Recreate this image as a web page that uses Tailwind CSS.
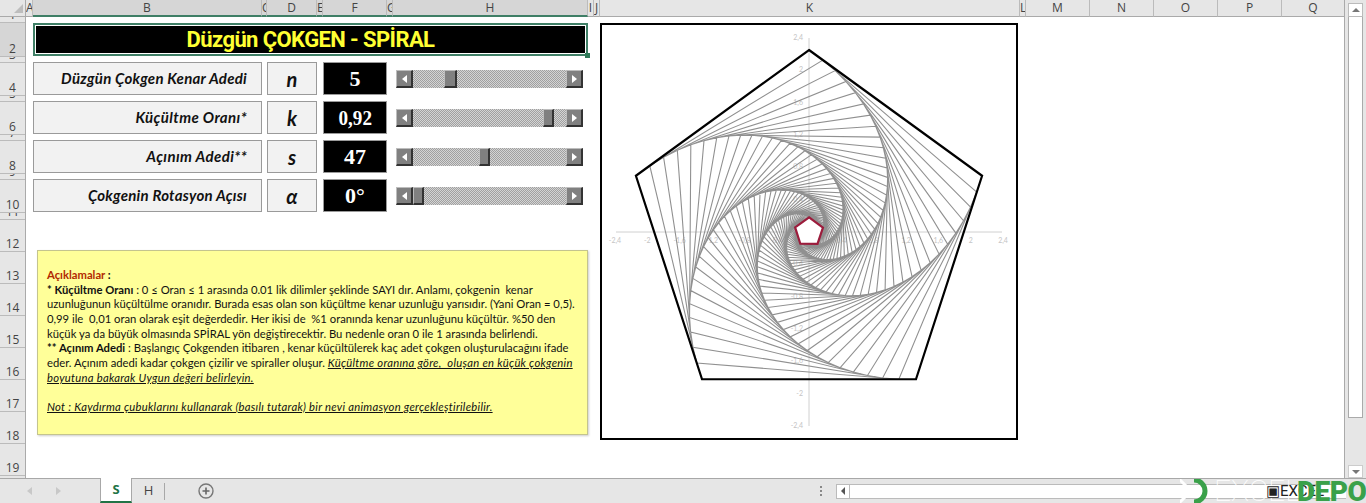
<!DOCTYPE html>
<html><head><meta charset="utf-8">
<script src="https://cdn.jsdelivr.net/npm/@tailwindcss/browser@4"></script>
</head>
<body class="w-[1366px] h-[503px] overflow-hidden bg-white font-['Liberation_Sans',sans-serif]">
<div class="flex flex-col h-[503px] w-[1366px] relative overflow-hidden">
  <!-- main -->
  <div class="flex h-[478px]">
    <div class="flex-1 flex flex-col min-w-0">
      <!-- column header -->
      <div class="flex h-[17px] bg-[#e6e6e6] text-[12px] text-[#444] font-['Open_Sans',sans-serif] leading-[16px] text-center shrink-0">
        <div class="w-[26px] shrink-0 border-r border-b border-[#aaa] flex items-end justify-end pr-[2px] pb-[3px]"><div class="w-0 h-0 border-l-[9px] border-l-transparent border-b-[9px] border-b-[#bdbdbd]"></div></div>
        <div class="w-[7px] border-r border-[#bbb] border-b border-b-[#aaa] overflow-hidden">A</div>
        <div class="w-[229px] bg-[#d6d6d6] border-r border-[#bbb] border-b-2 border-b-[#3f7f66]">B</div>
        <div class="w-[5px] bg-[#d6d6d6] border-r border-[#bbb] border-b-2 border-b-[#3f7f66] overflow-hidden">C</div>
        <div class="w-[50px] bg-[#d6d6d6] border-r border-[#bbb] border-b-2 border-b-[#3f7f66]">D</div>
        <div class="w-[6px] bg-[#d6d6d6] border-r border-[#bbb] border-b-2 border-b-[#3f7f66] overflow-hidden">E</div>
        <div class="w-[64px] bg-[#d6d6d6] border-r border-[#bbb] border-b-2 border-b-[#3f7f66]">F</div>
        <div class="w-[6px] bg-[#d6d6d6] border-r border-[#bbb] border-b-2 border-b-[#3f7f66] overflow-hidden">G</div>
        <div class="w-[195px] bg-[#d6d6d6] border-r border-[#bbb] border-b-2 border-b-[#3f7f66]">H</div>
        <div class="w-[6px] border-r border-[#bbb] border-b border-b-[#aaa] overflow-hidden">I</div>
        <div class="w-[6px] border-r border-[#bbb] border-b border-b-[#aaa] overflow-hidden">J</div>
        <div class="w-[420px] border-r border-[#bbb] border-b border-b-[#aaa]">K</div>
        <div class="w-[6px] border-r border-[#bbb] border-b border-b-[#aaa] overflow-hidden">L</div>
        <div class="w-[64px] border-r border-[#bbb] border-b border-b-[#aaa]">M</div>
        <div class="w-[64px] border-r border-[#bbb] border-b border-b-[#aaa]">N</div>
        <div class="w-[64px] border-r border-[#bbb] border-b border-b-[#aaa]">O</div>
        <div class="w-[64px] border-r border-[#bbb] border-b border-b-[#aaa]">P</div>
        <div class="flex-1 border-b border-b-[#aaa]">Q</div>
      </div>
      <div class="flex flex-1 min-h-0">
        <!-- row header -->
        <div class="w-[26px] shrink-0 bg-[#e6e6e6] border-r border-[#aaa] text-[12px] text-[#444] font-['Open_Sans',sans-serif] text-center leading-[15px] flex flex-col overflow-hidden">
          <div class="h-[6px] shrink-0 border-b border-[#bbb] overflow-hidden flex items-end justify-center">1</div>
          <div class="h-[34px] shrink-0 bg-[#d6d6d6] border-b border-[#bbb] flex items-end justify-center">2</div>
          <div class="h-[6px] shrink-0 border-b border-[#bbb] overflow-hidden flex items-end justify-center">3</div>
          <div class="h-[33px] shrink-0 border-b border-[#bbb] flex items-end justify-center">4</div>
          <div class="h-[6px] shrink-0 border-b border-[#bbb] overflow-hidden flex items-end justify-center">5</div>
          <div class="h-[33px] shrink-0 border-b border-[#bbb] flex items-end justify-center">6</div>
          <div class="h-[6px] shrink-0 border-b border-[#bbb] overflow-hidden flex items-end justify-center">7</div>
          <div class="h-[33px] shrink-0 border-b border-[#bbb] flex items-end justify-center">8</div>
          <div class="h-[6px] shrink-0 border-b border-[#bbb] overflow-hidden flex items-end justify-center">9</div>
          <div class="h-[33px] shrink-0 border-b border-[#bbb] flex items-end justify-center">10</div>
          <div class="h-[7px] shrink-0 border-b border-[#bbb] overflow-hidden flex items-end justify-center">11</div>
          <div class="h-[32px] shrink-0 border-b border-[#bbb] flex items-end justify-center">12</div>
          <div class="h-[32px] shrink-0 border-b border-[#bbb] flex items-end justify-center">13</div>
          <div class="h-[32px] shrink-0 border-b border-[#bbb] flex items-end justify-center">14</div>
          <div class="h-[32px] shrink-0 border-b border-[#bbb] flex items-end justify-center">15</div>
          <div class="h-[32px] shrink-0 border-b border-[#bbb] flex items-end justify-center">16</div>
          <div class="h-[32px] shrink-0 border-b border-[#bbb] flex items-end justify-center">17</div>
          <div class="h-[32px] shrink-0 border-b border-[#bbb] flex items-end justify-center">18</div>
          <div class="h-[32px] shrink-0 border-b border-[#bbb] flex items-end justify-center">19</div>
        </div>
        <!-- sheet -->
        <div class="flex-1 flex min-w-0 bg-white">
          <div class="w-[574px] shrink-0 pl-[7px] pt-[6px] flex flex-col">
            <!-- title -->
            <div class="relative w-[555px] h-[33px] bg-black border-2 border-[#3f7f66] outline outline-1 outline-white -outline-offset-[3px] flex items-center justify-center text-[#ffff33] font-['Roboto',sans-serif] font-bold text-[22px] leading-none tracking-[-0.6px]">
              Düzgün ÇOKGEN - SPİRAL
              <div class="absolute -right-[4px] -bottom-[4px] w-[5px] h-[5px] bg-[#2f7a58] border-0"></div>
            </div>
            <!-- rows -->
            <div class="flex flex-col gap-[6px] mt-[6px]">
              <div class="flex h-[33px]">
                <div class="w-[229px] bg-[#f2f2f2] border border-[#9a9a9a] flex items-center justify-end pr-[14px] font-['Lato',sans-serif] font-bold italic text-[15px] text-[#111] tracking-[0.25px]">Düzgün Çokgen Kenar Adedi</div>
                <div class="w-[50px] ml-[5px] bg-[#f2f2f2] border border-[#9a9a9a] flex items-center justify-center font-['Lato',sans-serif] font-bold italic text-[20px] text-[#111]">n</div>
                <div class="w-[64px] ml-[6px] bg-black border border-[#9a9a9a] flex items-center justify-center font-['Liberation_Serif',serif] font-bold text-[22px] text-white">5</div>
                <div class="ml-[9px] w-[187px] h-[18px] mt-[8px] flex">
                  <div class="w-[17px] h-[18px] bg-[#808080] border-t border-l border-[#bdbdbd] border-r-2 border-b-2 border-r-[#333] border-b-[#333] flex items-center justify-center"><div class="w-0 h-0 border-y-[4px] border-y-transparent border-r-[5px] border-r-white"></div></div>
                  <div class="flex-1 flex bg-[repeating-conic-gradient(#a0a0a0_0_25%,#d4d4d4_0_50%)] bg-[length:2px_2px]">
                    <div class="ml-[31px] w-[13px] h-[18px] bg-[#808080] border-t border-l border-[#bdbdbd] border-r-2 border-b-2 border-r-[#333] border-b-[#333]"></div>
                  </div>
                  <div class="w-[17px] h-[18px] bg-[#808080] border-t border-l border-[#bdbdbd] border-r-2 border-b-2 border-r-[#333] border-b-[#333] flex items-center justify-center"><div class="w-0 h-0 border-y-[4px] border-y-transparent border-l-[5px] border-l-white"></div></div>
                </div>
              </div>
              <div class="flex h-[33px]">
                <div class="w-[229px] bg-[#f2f2f2] border border-[#9a9a9a] flex items-center justify-end pr-[14px] font-['Lato',sans-serif] font-bold italic text-[15px] text-[#111] tracking-[0.4px]">Küçültme Oranı*</div>
                <div class="w-[50px] ml-[5px] bg-[#f2f2f2] border border-[#9a9a9a] flex items-center justify-center font-['Lato',sans-serif] font-bold italic text-[20px] text-[#111]">k</div>
                <div class="w-[64px] ml-[6px] bg-black border border-[#9a9a9a] flex items-center justify-center font-['Liberation_Serif',serif] font-bold text-[22px] text-white"><span class="scale-x-[0.87]">0,92</span></div>
                <div class="ml-[9px] w-[187px] h-[18px] mt-[8px] flex">
                  <div class="w-[17px] h-[18px] bg-[#808080] border-t border-l border-[#bdbdbd] border-r-2 border-b-2 border-r-[#333] border-b-[#333] flex items-center justify-center"><div class="w-0 h-0 border-y-[4px] border-y-transparent border-r-[5px] border-r-white"></div></div>
                  <div class="flex-1 flex bg-[repeating-conic-gradient(#a0a0a0_0_25%,#d4d4d4_0_50%)] bg-[length:2px_2px]">
                    <div class="ml-[130px] w-[11px] h-[18px] bg-[#808080] border-t border-l border-[#bdbdbd] border-r-2 border-b-2 border-r-[#333] border-b-[#333]"></div>
                  </div>
                  <div class="w-[17px] h-[18px] bg-[#808080] border-t border-l border-[#bdbdbd] border-r-2 border-b-2 border-r-[#333] border-b-[#333] flex items-center justify-center"><div class="w-0 h-0 border-y-[4px] border-y-transparent border-l-[5px] border-l-white"></div></div>
                </div>
              </div>
              <div class="flex h-[33px]">
                <div class="w-[229px] bg-[#f2f2f2] border border-[#9a9a9a] flex items-center justify-end pr-[14px] font-['Lato',sans-serif] font-bold italic text-[15px] text-[#111] tracking-[0.4px]">Açınım Adedi**</div>
                <div class="w-[50px] ml-[5px] bg-[#f2f2f2] border border-[#9a9a9a] flex items-center justify-center font-['Lato',sans-serif] font-bold italic text-[20px] text-[#111]">s</div>
                <div class="w-[64px] ml-[6px] bg-black border border-[#9a9a9a] flex items-center justify-center font-['Liberation_Serif',serif] font-bold text-[22px] text-white">47</div>
                <div class="ml-[9px] w-[187px] h-[18px] mt-[8px] flex">
                  <div class="w-[17px] h-[18px] bg-[#808080] border-t border-l border-[#bdbdbd] border-r-2 border-b-2 border-r-[#333] border-b-[#333] flex items-center justify-center"><div class="w-0 h-0 border-y-[4px] border-y-transparent border-r-[5px] border-r-white"></div></div>
                  <div class="flex-1 flex bg-[repeating-conic-gradient(#a0a0a0_0_25%,#d4d4d4_0_50%)] bg-[length:2px_2px]">
                    <div class="ml-[66px] w-[11px] h-[18px] bg-[#808080] border-t border-l border-[#bdbdbd] border-r-2 border-b-2 border-r-[#333] border-b-[#333]"></div>
                  </div>
                  <div class="w-[17px] h-[18px] bg-[#808080] border-t border-l border-[#bdbdbd] border-r-2 border-b-2 border-r-[#333] border-b-[#333] flex items-center justify-center"><div class="w-0 h-0 border-y-[4px] border-y-transparent border-l-[5px] border-l-white"></div></div>
                </div>
              </div>
              <div class="flex h-[33px]">
                <div class="w-[229px] bg-[#f2f2f2] border border-[#9a9a9a] flex items-center justify-end pr-[14px] font-['Lato',sans-serif] font-bold italic text-[15px] text-[#111] tracking-[0.25px]">Çokgenin Rotasyon Açısı</div>
                <div class="w-[50px] ml-[5px] bg-[#f2f2f2] border border-[#9a9a9a] flex items-center justify-center font-['Lato',sans-serif] font-bold italic text-[20px] text-[#111]">α</div>
                <div class="w-[64px] ml-[6px] bg-black border border-[#9a9a9a] flex items-center justify-center font-['Liberation_Serif',serif] font-bold text-[22px] text-white">0°</div>
                <div class="ml-[9px] w-[187px] h-[18px] mt-[8px] flex">
                  <div class="w-[17px] h-[18px] bg-[#808080] border-t border-l border-[#bdbdbd] border-r-2 border-b-2 border-r-[#333] border-b-[#333] flex items-center justify-center"><div class="w-0 h-0 border-y-[4px] border-y-transparent border-r-[5px] border-r-white"></div></div>
                  <div class="flex-1 flex bg-[repeating-conic-gradient(#a0a0a0_0_25%,#d4d4d4_0_50%)] bg-[length:2px_2px]">
                    <div class="w-[11px] h-[18px] bg-[#808080] border-t border-l border-[#bdbdbd] border-r-2 border-b-2 border-r-[#333] border-b-[#333]"></div>
                  </div>
                  <div class="w-[17px] h-[18px] bg-[#808080] border-t border-l border-[#bdbdbd] border-r-2 border-b-2 border-r-[#333] border-b-[#333] flex items-center justify-center"><div class="w-0 h-0 border-y-[4px] border-y-transparent border-l-[5px] border-l-white"></div></div>
                </div>
              </div>
            </div>
            <!-- note -->
            <div class="mt-[38px] ml-[4px] w-[551px] h-[185px] bg-[#ffff99] border border-[#c4c48e] shadow-[1px_1px_2px_rgba(0,0,0,0.2)] pl-[9px] pt-[17px] font-['Lato',sans-serif] text-[11.25px] leading-[14.67px] text-[#111] [&>div]:whitespace-pre">
              <div class="font-bold text-[#b22a00]">Açıklamalar <span class="text-[#111]">:</span></div>
              <div><b>* Küçültme Oranı</b> : 0 ≤ Oran ≤ 1 arasında 0.01 lik dilimler şeklinde SAYI dır. Anlamı, çokgenin  kenar</div>
              <div>uzunluğunun küçültülme oranıdır. Burada esas olan son küçültme kenar uzunluğu yarısıdır. (Yani Oran = 0,5).</div>
              <div>0,99 ile  0,01 oran olarak eşit değerdedir. Her ikisi de  %1 oranında kenar uzunluğunu küçültür. %50 den</div>
              <div>küçük ya da büyük olmasında SPİRAL yön değiştirecektir. Bu nedenle oran 0 ile 1 arasında belirlendi.</div>
              <div><b>** Açınım Adedi</b> : Başlangıç Çokgenden itibaren , kenar küçültülerek kaç adet çokgen oluşturulacağını ifade</div>
              <div>eder. Açınım adedi kadar çokgen çizilir ve spiraller oluşur. <i class="underline tracking-[0.27px]">Küçültme oranına göre,  oluşan en küçük çokgenin</i></div>
              <div><i class="underline tracking-[0.27px]">boyutuna bakarak Uygun değeri belirleyin.</i></div>
              <div>&nbsp;</div>
              <div><i class="underline tracking-[0.27px]">Not : Kaydırma çubuklarını kullanarak (basılı tutarak) bir nevi animasyon gerçekleştirilebilir.</i></div>
            </div>
          </div>
          <!-- chart -->
          <div class="pt-[6px]">
            <div class="w-[418px] h-[417px] border-2 border-black bg-white">
              <svg id="chart" width="414" height="413" viewBox="602 25 414 413" xmlns="http://www.w3.org/2000/svg" font-family="Lato, sans-serif" font-size="7" fill="#c4c4c4"></svg>
            </div>
          </div>
        </div>
      </div>
    </div>
    <!-- vertical scrollbar -->
    <div class="w-[22px] shrink-0 bg-[#e6e6e6] border-l border-[#aaa] flex flex-col items-start pt-[3px] pl-[3px]">
      <div class="w-[15px] h-[14px] bg-white border border-[#bbb] flex items-center justify-center shrink-0"><div class="w-0 h-0 border-x-[4px] border-x-transparent border-b-[4px] border-b-[#777]"></div></div>
      <div class="w-[15px] h-[401px] bg-white border-x border-b border-[#aaa] shrink-0"></div>
      <div class="flex-1"></div>
      <div class="w-[15px] h-[13px] bg-white border border-[#ccc] flex items-center justify-center shrink-0"><div class="w-0 h-0 border-x-[4px] border-x-transparent border-t-[4px] border-t-[#777]"></div></div>
    </div>
  </div>
  <!-- tab bar -->
  <div class="h-[25px] flex bg-[#e6e6e6] border-t border-[#a8a8a8] font-['Open_Sans',sans-serif] text-[13px] items-stretch">
    <div class="w-[100px] flex items-center pl-[27px] gap-[24px]">
      <div class="w-0 h-0 border-y-[4px] border-y-transparent border-r-[5px] border-r-[#c8c8c8]"></div>
      <div class="w-0 h-0 border-y-[4px] border-y-transparent border-l-[5px] border-l-[#c8c8c8]"></div>
    </div>
    <div class="w-[32px] -mt-[1px] bg-white border-x border-[#a8a8a8] border-b-2 border-b-[#217346] flex items-center justify-center font-bold text-[#217346]">S</div>
    <div class="w-[33px] flex items-center justify-center text-[#444] relative">H<div class="absolute right-0 top-[4px] bottom-[3px] w-px bg-[#a8a8a8]"></div></div>
    <div class="ml-[33px] flex items-center">
      <svg width="16" height="16" viewBox="0 0 16 16"><circle cx="8" cy="8" r="7" fill="none" stroke="#777" stroke-width="1.4"/><path d="M8 4.5v7M4.5 8h7" stroke="#666" stroke-width="1.6"/></svg>
    </div>
    <div class="ml-[606px] flex items-center w-[16px]">
      <div class="w-[2px] h-[10px] border-l-2 border-dotted border-[#888]"></div>
    </div>
    <div class="flex items-center">
      <div class="w-[14px] h-[15px] bg-white border border-[#bbb] flex items-center justify-center"><div class="w-0 h-0 border-y-[4px] border-y-transparent border-r-[4px] border-r-[#555]"></div></div>
      <div class="w-[496px] h-[15px] bg-white border-y border-[#bbb]"></div>
    </div>
  </div>
  <!-- watermark -->
  <div class="absolute left-[1180px] top-[479px] w-[186px] h-[24px] overflow-hidden">
    <svg class="absolute left-0 top-0" width="40" height="30" viewBox="0 0 40 30"><path d="M-1 0l12 12l-12 12" fill="none" stroke="#fff" stroke-width="3"/><path d="M14 1a11 11 0 0 1 0 22" fill="none" stroke="#3aa14a" stroke-width="5"/></svg>
    <span class="absolute left-[34px] -top-[3px] text-[30px] leading-none font-['Roboto',sans-serif] font-thin text-white">EXCEL</span>
    <span class="absolute left-[86px] top-[5px] text-[15px] leading-none font-['Roboto',sans-serif] text-[#222]">▣EXCEL</span>
    <span class="absolute left-[117px] -top-[1px] text-[28px] leading-none font-['Roboto',sans-serif] font-black text-[#3aa14a] tracking-[-0.5px]">DEPO</span>
  </div>
</div>
<script>
(function(){
  var svg=document.getElementById('chart'),cx=809,cy=232,R=182,NS='http://www.w3.org/2000/svg';
  function el(n,a,t){var e=document.createElementNS(NS,n);for(var k in a)e.setAttribute(k,a[k]);if(t)e.textContent=t;svg.appendChild(e);return e;}
  el('path',{d:'M616 232H1002M809 38V426',stroke:'#d0d0d0','stroke-width':'1',fill:'none'});
  var lab=['2,4','2','1,6','1,2','0,8','0,4'];
  lab.forEach(function(l,i){var d=194-i*32.33;
    el('text',{x:cx-d,y:cy+11,'text-anchor':'middle'},'-'+l);
    el('text',{x:cx+d,y:cy+11,'text-anchor':'middle'},l);
    el('text',{x:cx-6,y:cy-d+2,'text-anchor':'end'},l);
    el('text',{x:cx-6,y:cy+d+2,'text-anchor':'end'},'-'+l);
  });
  el('text',{x:cx-1,y:cy+11,'text-anchor':'middle'},'0');
  var p=[];for(var i=0;i<5;i++){var a=2*Math.PI*i/5;p.push([cx+R*Math.sin(a),cy-R*Math.cos(a)]);}
  var outer=p,d='',t=0.08,last=p;
  function str(q){return 'M'+q.map(function(v){return v[0].toFixed(2)+' '+v[1].toFixed(2)}).join('L')+'Z';}
  for(var n=0;n<47;n++){
    var q=[];for(var i=0;i<5;i++){var u=p[i],v=p[(i+1)%5];q.push([u[0]+(v[0]-u[0])*t,u[1]+(v[1]-u[1])*t]);}
    p=q;last=q;d+=str(q);
  }
  el('path',{d:d,fill:'none',stroke:'#909090','stroke-width':'1.1'});
  el('path',{d:str(outer),fill:'none',stroke:'#000','stroke-width':'2.2'});
  el('path',{d:str(last),fill:'#fff',stroke:'#9c1c3c','stroke-width':'2.2'});
})();
</script>
</body></html>
